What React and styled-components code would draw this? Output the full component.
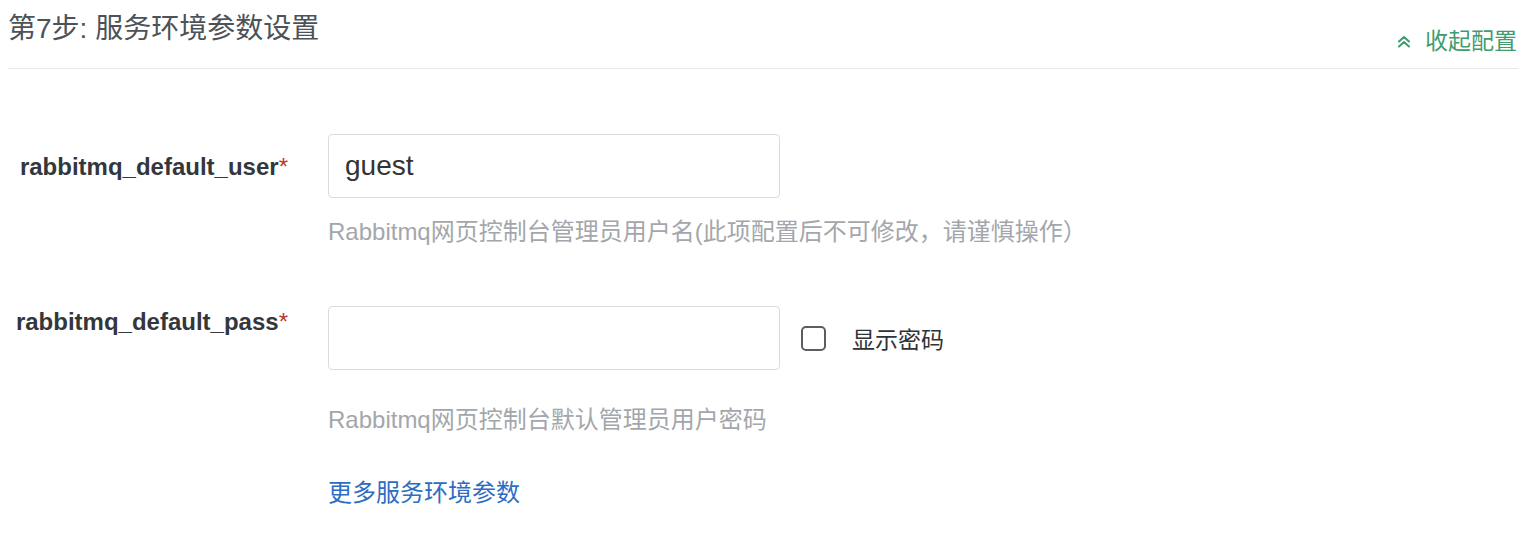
import React, { useState } from "react";
import styled, { createGlobalStyle } from "styled-components";

const GlobalStyle = createGlobalStyle`
  body {
    margin: 0;
    background: #ffffff;
    font-family: "Liberation Sans", "Noto Sans CJK SC", sans-serif;
  }
`;

function ChevronsUp() {
  return (
    <svg width="14" height="13" viewBox="0 0 14 13" fill="none">
      <path d="M2 6.5L7 2L12 6.5" stroke="#3f9c6f" strokeWidth="2" strokeLinecap="round" strokeLinejoin="round" />
      <path d="M2 11.5L7 7L12 11.5" stroke="#3f9c6f" strokeWidth="2" strokeLinecap="round" strokeLinejoin="round" />
    </svg>
  );
}

function App() {
  const [show, setShow] = useState(false);
  return (
    <Page>
      <GlobalStyle />
      <Header>
        <Title>第7步: 服务环境参数设置</Title>
        <Collapse>
          <ChevronsUp />
          <span>收起配置</span>
        </Collapse>
      </Header>
      <Form>
        <Row>
          <Label offset={18}>
            rabbitmq_default_user<Star>*</Star>
          </Label>
          <Field>
            <InputLine>
              <Input defaultValue="guest" />
            </InputLine>
            <Help gap={19}>Rabbitmq网页控制台管理员用户名(此项配置后不可修改，请谨慎操作）</Help>
          </Field>
        </Row>
        <Row top={59}>
          <Label offset={1}>
            rabbitmq_default_pass<Star>*</Star>
          </Label>
          <Field>
            <InputLine>
              <Input type={show ? "text" : "password"} />
              <CheckLabel>
                <Box checked={show} onClick={() => setShow(!show)} />
                <span>显示密码</span>
              </CheckLabel>
            </InputLine>
            <Help gap={35}>Rabbitmq网页控制台默认管理员用户密码</Help>
            <MoreLink href="#">更多服务环境参数</MoreLink>
          </Field>
        </Row>
      </Form>
    </Page>
  );
}

const Page = styled.div`
  padding: 0 8px;
`;

const Header = styled.div`
  display: flex;
  justify-content: space-between;
  align-items: flex-start;
  height: 68px;
  border-bottom: 1px solid #e6e8ea;
`;

const Title = styled.h3`
  margin: 10px 0 0;
  font-size: 28px;
  line-height: 38px;
  font-weight: 400;
  color: #4d5258;
`;

const Collapse = styled.div`
  display: flex;
  align-items: center;
  gap: 14px;
  margin-top: 26px;
  margin-right: 1px;
  font-size: 23px;
  line-height: 30px;
  color: #3f9c6f;
  cursor: pointer;
`;

const Form = styled.div`
  padding-top: 65px;
`;

const Row = styled.div`
  display: grid;
  grid-template-columns: 280px 1fr;
  column-gap: 40px;
  margin-top: ${(p) => p.top || 0}px;
`;

const Label = styled.div`
  text-align: right;
  padding-top: ${(p) => p.offset}px;
  font-size: 24px;
  line-height: 30px;
  font-weight: 700;
  color: #33373b;
`;

const Star = styled.span`
  color: #c0392b;
  font-weight: 400;
`;

const Field = styled.div`
  display: flex;
  flex-direction: column;
  align-items: flex-start;
`;

const InputLine = styled.div`
  display: flex;
  align-items: center;
`;

const Input = styled.input`
  box-sizing: border-box;
  width: 452px;
  height: 64px;
  padding: 0 16px;
  border: 1.5px solid #d8dce2;
  border-radius: 4px;
  font-family: "Liberation Sans", "Noto Sans CJK SC", sans-serif;
  font-size: 28px;
  color: #333;
  outline: none;
`;

const CheckLabel = styled.label`
  display: flex;
  align-items: center;
  gap: 26px;
  margin-left: 21px;
  font-size: 23px;
  color: #2f3337;
`;

const Box = styled.span`
  box-sizing: border-box;
  width: 25px;
  height: 25px;
  border: 2px solid #5a5e63;
  border-radius: 5px;
  background: ${(p) => (p.checked ? "#3f9c6f" : "#fff")};
  cursor: pointer;
`;

const Help = styled.div`
  margin-top: ${(p) => p.gap}px;
  font-size: 24px;
  line-height: 30px;
  color: #a3a7ab;
`;

const MoreLink = styled.a`
  margin-top: 43px;
  font-size: 24px;
  line-height: 30px;
  color: #2d6cc3;
  text-decoration: none;
`;

export default App;
